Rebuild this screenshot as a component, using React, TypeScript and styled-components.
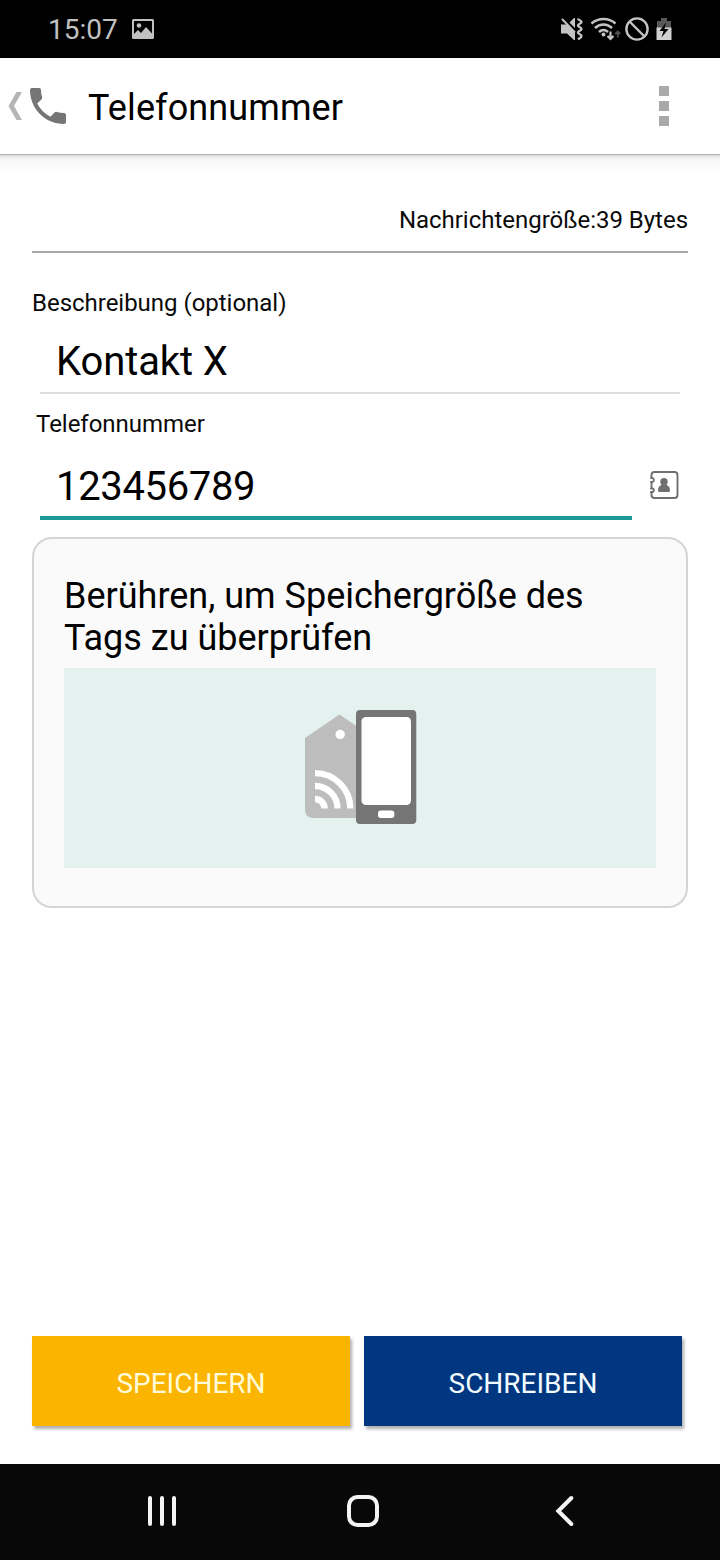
import React from 'react';
import styled, { createGlobalStyle } from 'styled-components';

const GlobalStyle = createGlobalStyle`
  * { box-sizing: border-box; }
  body { margin: 0; background: #fff; }
  svg { display: block; flex: none; }
`;

const Screen = styled.div`
  width: 720px;
  height: 1560px;
  display: flex;
  flex-direction: column;
  background: #fff;
  color: #0a0a0a;
  font-family: Roboto, sans-serif;
  overflow: hidden;
`;

const StatusBar = styled.div`
  height: 58px;
  flex: none;
  display: flex;
  align-items: center;
  padding: 0 48px 0 48px;
  background: #000;
  color: #c0c0c0;
`;

const Clock = styled.span`
  font-size: 28px;
  line-height: 58px;
  margin-right: 14px;
  padding-top: 1px;
`;

const StatusIcons = styled.div`
  display: flex;
  align-items: center;
  margin-left: auto;
`;

const Header = styled.header`
  height: 97px;
  flex: none;
  display: flex;
  align-items: center;
  padding: 0 51px 0 8px;
  border-bottom: 1px solid #b0b0b0;
`;

const HeaderShadow = styled.div`
  height: 18px;
  flex: none;
  background: linear-gradient(#d6d6d6 0, #ececec 2px, #f7f7f7 5px, #fafafa 10px, #fff 18px);
`;

const Title = styled.h1`
  flex: 1;
  margin: 4px 0 0 22px;
  font-size: 36px;
  letter-spacing: 0.1px;
  font-weight: 400;
  line-height: 42px;
  color: #000;
`;

const MenuButton = styled.div`
  display: flex;
  flex-direction: column;
  gap: 5px;
`;

const MenuDot = styled.span`
  width: 10px;
  height: 10px;
  background: #a9a9a9;
`;

const Content = styled.main`
  flex: 1;
  display: flex;
  flex-direction: column;
  padding: 33px 32px 0;
`;

const MessageSize = styled.div`
  height: 47px;
  text-align: right;
  font-size: 24px;
  letter-spacing: -0.02px;
  line-height: 28px;
  border-bottom: 2px solid #a8a8a8;
`;

const Label = styled.label<{ $top: number; $indent?: number }>`
  margin-top: ${(p) => p.$top}px;
  padding-left: ${(p) => p.$indent ?? 0}px;
  font-size: 24px;
  letter-spacing: -0.02px;
  line-height: 28px;
`;

const FieldRow = styled.div`
  display: flex;
  align-items: flex-start;
  padding: 0 8px;
`;

const Field = styled.div<{ $active?: boolean }>`
  flex: 1;
  height: ${(p) => (p.$active ? 82 : 77)}px;
  padding: ${(p) => (p.$active ? 25 : 21)}px 16px 0;
  font-size: 40px;
  line-height: 48px;
  letter-spacing: ${(p) => (p.$active ? -0.35 : -0.1)}px;
  color: #000;
  border-bottom: ${(p) => (p.$active ? '4px solid #1b9a98' : '2px solid #dedede')};
`;

const ContactButton = styled.div`
  width: 48px;
  padding: 33px 0 0 17.5px;
`;

const Card = styled.section`
  height: 371px;
  margin-top: 17px;
  padding: 36px 30px 0;
  border: 2px solid #d5d5d5;
  border-radius: 20px;
  background: #fafafa;
`;

const CardText = styled.p`
  margin: 0 0 9px;
  font-size: 36px;
  line-height: 42px;
  color: #000;
`;

const TagPanel = styled.div`
  height: 200px;
  display: flex;
  justify-content: center;
  align-items: center;
  padding: 0 0 2px 2px;
  background: #e3f2ee;
`;

const Actions = styled.div`
  display: flex;
  gap: 14px;
  margin-top: auto;
  padding: 0 6px 38px 0;
`;

const ActionButton = styled.button<{ $color: string; $text: string }>`
  flex: 1;
  height: 90px;
  padding: 5px 0 0;
  border: 0;
  background: ${(p) => p.$color};
  color: ${(p) => p.$text};
  font: 400 28px/33px Roboto, sans-serif;
  box-shadow: 2px 3px 3px rgba(0, 0, 0, 0.32);
`;

const NavBar = styled.nav`
  height: 96px;
  flex: none;
  display: grid;
  grid-template-columns: 199px 209px auto;
  align-items: center;
  padding: 0 0 2px 147px;
  background: #080808;
`;

const PictureIcon = () => (
  <svg width="22" height="20" viewBox="0 0 22 20">
    <path fill="#c0c0c0" fillRule="evenodd" d="M1.500 0h19A1.500 1.500 0 0 1 22 1.500v17a1.500 1.500 0 0 1-1.500 1.500h-19A1.500 1.500 0 0 1 0 18.500v-17A1.500 1.500 0 0 1 1.500 0zM2 2v13l4-4 3 3 5-6 6 6.500V2z" />
    <circle cx="7" cy="6.500" r="2.300" fill="#c0c0c0" />
  </svg>
);

const MuteIcon = () => (
  <svg width="24" height="24" viewBox="560 17 24 24">
    <path fill="#c4c4c4" d="M561 24.500h7l7 8V40h-1l-7-6.500h-6zM569.500 22.500l4.500-4.500h1v10z" />
    <path d="M562 19l13 13.500" stroke="#c4c4c4" strokeWidth="2" />
    <path d="M578 18.500c0 2 3.500 1.500 3.500 3.500s-3.500 1.500-3.500 3.500 3.500 1.500 3.500 3.500-3.500 1.500-3.500 3.500 3.500 1.500 3.500 3.500-2 2-3.500 3.500" fill="none" stroke="#c4c4c4" strokeWidth="2.400" />
  </svg>
);

const WifiIcon = () => (
  <svg width="30" height="24" viewBox="591 17 30 24">
    <g fill="none" stroke="#c4c4c4" strokeWidth="2.500">
      <path d="M591.500 23.500c7-6 17-6 24 0" />
      <path d="M595 28c5-4.700 12-4.700 17 0" />
      <path d="M599 32c3-2.700 6-2.700 9 0" />
      <path d="M610.500 31.500v7M607.500 36l3 3 3-3" strokeWidth="2.200" />
      <path d="M617.800 37.500v-5M615.300 34l2.500-2.500 2.500 2.500" stroke="#505050" strokeWidth="1.800" />
    </g>
    <circle cx="603.500" cy="34.500" r="2" fill="#c4c4c4" />
  </svg>
);

const BlockedIcon = () => (
  <svg width="24" height="24" viewBox="0 0 24 24">
    <g fill="none" stroke="#c4c4c4" strokeWidth="2.400">
      <circle cx="12" cy="12" r="10.600" />
      <path d="M4.500 4.500l15 15" />
    </g>
  </svg>
);

const BatteryIcon = () => (
  <svg width="16" height="22" viewBox="0 0 16 22">
    <path fill="#585858" d="M5 0h6v3h4v7H1V3h4z" />
    <path fill="#d0d0d0" d="M.5 9.500h15V22H.5z" />
    <path fill="#000" d="M10 4.500L3.500 13h4l-2 6.500 7-8.500H8.500z" />
  </svg>
);

const UpIcon = () => (
  <svg width="14" height="28" viewBox="0 0 14 28">
    <path fill="#b5b5b5" d="M8.500 0H14L6 14l8 14H8.500L.5 14z" />
  </svg>
);

const PhoneIcon = () => (
  <svg width="36" height="36" viewBox="3 3 18 18">
    <path fill="#757575" d="M6.620 10.790c1.440 2.830 3.760 5.140 6.590 6.590l2.200-2.200c.27-.27.670-.36 1.020-.24 1.120.37 2.330.57 3.570.57.550 0 1 .45 1 1V20c0 .55-.45 1-1 1-9.390 0-17-7.610-17-17 0-.55.45-1 1-1h3.500c.55 0 1 .45 1 1 0 1.250.2 2.450.57 3.570.11.35.03.74-.25 1.020l-2.200 2.200z" />
  </svg>
);

const ContactIcon = () => (
  <svg width="29" height="28" viewBox="0 0 29 28">
    <path d="M1.500 7V4Q1.500 1 4.500 1H24.500Q27.500 1 27.500 4V24Q27.500 27 24.500 27H4.500Q1.500 27 1.500 24V21q2.300.2 2.300-1.800T1.500 17.300V11q2.300.2 2.300-2T1.500 7" fill="none" stroke="#6f6f6f" strokeWidth="1.900" />
    <path d="M0 7.200h2.500M0 10.800h2.500M0 17.500h2.500M0 21h2.500" stroke="#6f6f6f" strokeWidth="1.300" />
    <path fill="#6f6f6f" d="M14 7a3.700 3.700 0 0 1 3.700 3.700c0 1.700-.7 2.500-1.200 3.300 2.500.8 3.500 2.500 3.500 5.500 0 1-1 1.500-2 1.500h-8c-1 0-2-.5-2-1.500 0-3 1-4.700 3.500-5.500-.5-.8-1.200-1.600-1.200-3.300A3.700 3.700 0 0 1 14 7z" />
  </svg>
);

const TagPhoneIcon = () => (
  <svg width="112" height="116" viewBox="305 709 112 116">
    <path fill="#bdbdbd" d="M305 738l34.500-23.500L374 738v80h-60.500q-8.500 0-8.500-8.500z" />
    <circle cx="340.200" cy="734.500" r="4.700" fill="#fff" />
    <g fill="none" stroke="#fff" strokeWidth="6.300">
      <path d="M315 799a9.500 9.500 0 0 1 9.500 9.500" strokeWidth="6.600" />
      <path d="M315 786a22.500 22.500 0 0 1 22.500 22.500" />
      <path d="M315 773.200a35.300 35.300 0 0 1 35.300 35.300" />
    </g>
    <rect x="356" y="710" width="60.300" height="114" rx="4" fill="#757575" />
    <rect x="361.500" y="717" width="49.500" height="88" rx="4.500" fill="#fff" />
    <rect x="378" y="810.500" width="16.300" height="7.500" rx="2.700" fill="#fff" />
  </svg>
);

const RecentsIcon = () => (
  <svg width="30" height="32" viewBox="0 0 30 32">
    <path d="M3 3v26M15 3v26M27 3v26" stroke="#f4f4f4" strokeWidth="4" strokeLinecap="round" />
  </svg>
);

const HomeIcon = () => (
  <svg width="34" height="34" viewBox="0 0 34 34">
    <rect x="3" y="3" width="28" height="28" rx="8.500" fill="none" stroke="#f4f4f4" strokeWidth="4" />
  </svg>
);

const BackIcon = () => (
  <svg width="20" height="32" viewBox="0 0 20 32">
    <path d="M16.300 3L3.300 16l13 13" fill="none" stroke="#f4f4f4" strokeWidth="4" strokeLinecap="round" />
  </svg>
);

const IconGap = styled.span<{ $size: number }>`
  width: ${(p) => p.$size}px;
`;

export default function App() {
  return (
    <Screen>
      <GlobalStyle />
      <StatusBar>
        <Clock>15:07</Clock>
        <PictureIcon />
        <StatusIcons>
          <MuteIcon />
          <IconGap $size={7} />
          <WifiIcon />
          <IconGap $size={4} />
          <BlockedIcon />
          <IconGap $size={7} />
          <BatteryIcon />
        </StatusIcons>
      </StatusBar>
      <Header>
        <UpIcon />
        <IconGap $size={8} />
        <PhoneIcon />
        <Title>Telefonnummer</Title>
        <MenuButton>
          <MenuDot />
          <MenuDot />
          <MenuDot />
        </MenuButton>
      </Header>
      <HeaderShadow />
      <Content>
        <MessageSize>Nachrichtengröße:39 Bytes</MessageSize>
        <Label $top={36}>Beschreibung (optional)</Label>
        <FieldRow>
          <Field>Kontakt X</Field>
        </FieldRow>
        <Label $top={16} $indent={4}>Telefonnummer</Label>
        <FieldRow>
          <Field $active>123456789</Field>
          <ContactButton>
            <ContactIcon />
          </ContactButton>
        </FieldRow>
        <Card>
          <CardText>
            Berühren, um Speichergröße des
            <br />
            Tags zu überprüfen
          </CardText>
          <TagPanel>
            <TagPhoneIcon />
          </TagPanel>
        </Card>
        <Actions>
          <ActionButton $color="#fbb500" $text="#fffbd9">SPEICHERN</ActionButton>
          <ActionButton $color="#003780" $text="#f2fbff">SCHREIBEN</ActionButton>
        </Actions>
      </Content>
      <NavBar>
        <RecentsIcon />
        <HomeIcon />
        <BackIcon />
      </NavBar>
    </Screen>
  );
}
